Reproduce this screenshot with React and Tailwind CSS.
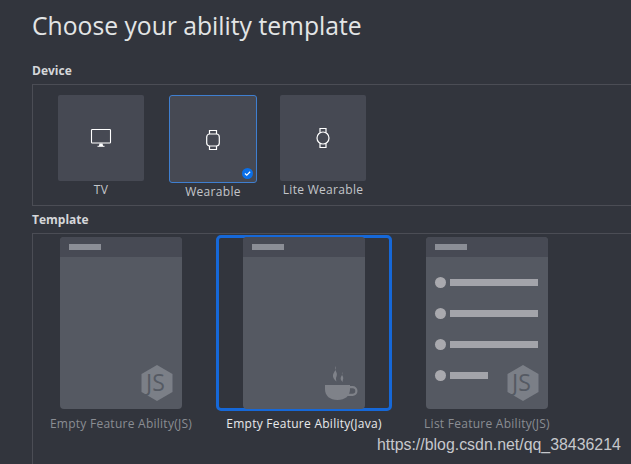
const TvIcon = () => (
  <svg width="24" height="24" viewBox="0 0 24 24" fill="none" stroke="#fff" strokeWidth="1.1">
    <rect x="2.5" y="3.5" width="19" height="13.5" rx="0.8" />
    <path d="M8.500 20.300h7" strokeWidth="1" />
    <path d="M10.500 17.500h3l.6 2.500h-4.200z" fill="#fff" stroke="none" />
  </svg>
);

const WatchIcon = () => (
  <svg width="24" height="24" viewBox="0 0 24 24" fill="none" stroke="#fff" strokeWidth="1.200" className="mt-[1px]">
    <rect x="5.700" y="6" width="12.600" height="12" rx="3" />
    <path d="M8.500 6V2.500h7V6M8.500 18v3.500h7V18" />
  </svg>
);

const RoundWatchIcon = () => (
  <svg width="24" height="24" viewBox="0 0 24 24" fill="none" stroke="#fff" strokeWidth="1.200">
    <circle cx="12" cy="12" r="6" />
    <path d="M9 6.800V2.500h6v4.300M9 17.200v4.300h6v-4.300" />
  </svg>
);

const JsBadge = () => (
  <svg width="34" height="38" viewBox="0 0 34 38" className="absolute right-[8px] bottom-[7px]">
    <polygon points="17,1 32.500,10 32.500,28 17,37 1.500,28 1.500,10" fill="#7b7f87" />
    <text x="15.500" y="27" textAnchor="middle" fontSize="23" fill="#555a63" fontFamily="'Open Sans', sans-serif">JS</text>
  </svg>
);

const CupIcon = () => (
  <svg width="34" height="36" viewBox="0 0 34 36" className="absolute right-[7px] bottom-[8px]" fill="#7f8289">
    <path d="M1 20h25v4C26 31 21 35 13.500 35S1 31 1 24z" />
    <path fillRule="evenodd" d="M25 21h3.500a5 5 0 0 1 0 10H22l2-2.200h4.500a2.800 2.800 0 0 0 0-5.600H25z" />
    <path d="M12 1c-3 4 2.500 6 .5 10.500-.6 1.300-.8 2.500 0 5-3.500-3-4.500-6-2.500-9C11.300 5.500 12 3.500 12 1z" />
    <path d="M18.500 7c-2 3 1.800 4.500.5 7.500-.3.800-.4 1.300 0 2.500-2.500-1.800-3-3.800-1.700-5.800.9-1.400 1.200-2.500 1.200-4.200z" />
  </svg>
);

const Preview = ({ children }) => (
  <div className="relative w-[122px] h-[172px] shrink-0 rounded-[4px] bg-[#555962] overflow-hidden flex flex-col">
    <div className="h-[20px] shrink-0 bg-[#474a54] pl-[9px] pt-[7px]">
      <div className="w-[32px] h-[6px] bg-[#8b8e96]" />
    </div>
    {children}
  </div>
);

const ListRow = ({ short }) => (
  <div className="flex items-center gap-[4px] h-[12px]">
    <div className="w-[11px] h-[11px] rounded-full bg-[#a9a9ae]" />
    <div className={short ? "w-[38px] h-[7px] bg-[#a3a4aa]" : "w-[88px] h-[7px] bg-[#a3a4aa]"} />
  </div>
);

export default function App() {
  return (
    <div className="relative w-[631px] h-[464px] overflow-hidden bg-[#32353d] text-[#c4c6ca] font-['Open_Sans',sans-serif]">
      <h1 className="pl-[32px] pt-[10px] h-[62px] text-[24.700px] leading-[32px] text-[#e3e5e6]">Choose your ability template</h1>

      <div className="pl-[32px] h-[22px] text-[12px] leading-[17px] font-bold text-[#d5d7da]">Device</div>
      <div className="ml-[32px] h-[122px] border-l border-y border-[#4b4d55] pl-[25px] pt-[10px] flex items-start">
        <div className="w-[86px] flex flex-col items-center">
          <div className="w-[86px] h-[86px] rounded-[2px] bg-[#464953] flex items-center justify-center">
            <TvIcon />
          </div>
          <span className="text-[12px] leading-[17px] tracking-[0.3px]">TV</span>
        </div>
        <div className="ml-[25px] w-[88px] flex flex-col items-center">
          <div className="relative w-[88px] h-[88px] rounded-[3px] border border-[#3f7fd0] bg-[#464953] flex items-center justify-center">
            <WatchIcon />
            <div className="absolute right-[3px] bottom-[3px] w-[11px] h-[11px] rounded-full bg-[#0a6fe8] flex items-center justify-center">
              <svg width="7" height="7" viewBox="0 0 8 8" fill="none" stroke="#fff" strokeWidth="1.300">
                <path d="M1 4l2.200 2L7 2" />
              </svg>
            </div>
          </div>
          <span className="text-[12px] leading-[17px] tracking-[0.3px]">Wearable</span>
        </div>
        <div className="ml-[23px] w-[86px] flex flex-col items-center">
          <div className="w-[86px] h-[86px] rounded-[2px] bg-[#464953] flex items-center justify-center">
            <RoundWatchIcon />
          </div>
          <span className="text-[12px] leading-[17px] tracking-[0.3px] whitespace-nowrap">Lite Wearable</span>
        </div>
      </div>

      <div className="pl-[32px] pt-[5px] h-[27px] text-[12px] leading-[17px] font-bold text-[#d5d7da]">Template</div>
      <div className="ml-[32px] h-[231px] border-l border-t border-[#4b4d55] pl-[27px] pt-[1px] flex items-start">
        <div className="flex flex-col items-center w-[122px] pt-[2px]">
          <Preview>
            <JsBadge />
          </Preview>
          <span className="mt-[6px] text-[12px] leading-[17px] tracking-[0.26px] whitespace-nowrap text-[#8a8d93]">Empty Feature Ability(JS)</span>
        </div>
        <div className="ml-[34px] flex flex-col items-center w-[176px]">
          <div className="w-[176px] h-[176px] rounded-[5px] border-[3px] border-[#1668d8] flex justify-center">
            <div className="-mt-[1px]">
              <Preview>
                <CupIcon />
              </Preview>
            </div>
          </div>
          <span className="mt-[4px] text-[12px] leading-[17px] tracking-[0.26px] whitespace-nowrap text-[#e8e9eb]">Empty Feature Ability(Java)</span>
        </div>
        <div className="ml-[34px] flex flex-col items-center w-[122px] pt-[2px]">
          <Preview>
            <div className="flex flex-col gap-[19px] pl-[9px] pt-[19px]">
              <ListRow />
              <ListRow />
              <ListRow />
              <ListRow short />
            </div>
            <JsBadge />
          </Preview>
          <span className="mt-[6px] text-[12px] leading-[17px] tracking-[0.26px] whitespace-nowrap text-[#8a8d93]">List Feature Ability(JS)</span>
        </div>
      </div>

      <div className="absolute left-[377px] top-[435px] text-[15.900px] leading-[20px] whitespace-nowrap text-[#c6c8cc] font-['Liberation_Sans',sans-serif]">
        https://blog.csdn.net/qq_38436214
      </div>
    </div>
  );
}
